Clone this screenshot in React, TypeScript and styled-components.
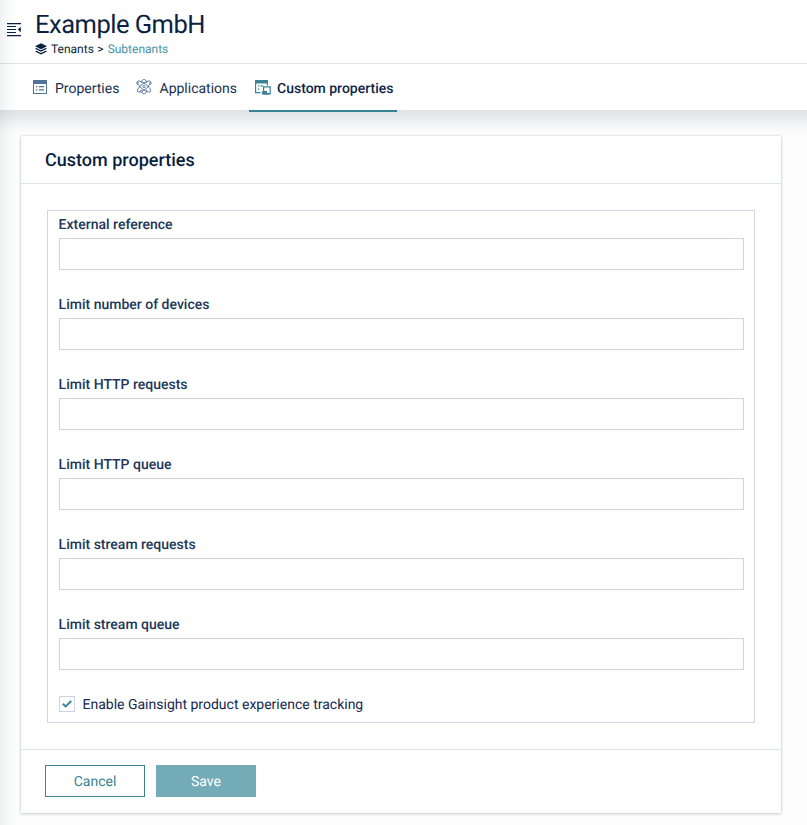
import React, { useState } from 'react';
import styled, { createGlobalStyle, css } from 'styled-components';

const GlobalStyle = createGlobalStyle`
  *, *::before, *::after { box-sizing: border-box; }
  body {
    margin: 0;
    background: #fdfdfd;
    color: #0b1f41;
    font-family: Roboto, sans-serif;
    font-size: 14px;
    line-height: 20px;
    text-rendering: geometricPrecision;
    overflow: hidden;
  }
`;

const Page = styled.div`
  position: relative;
  height: 825px;
  background: #fdfdfd;
`;

const EdgeShadow = styled.div`
  position: absolute;
  inset: 0 auto 0 0;
  width: 17px;
  pointer-events: none;
  background: linear-gradient(to right, rgba(40, 60, 90, 0.07), rgba(40, 60, 90, 0.03) 40%, rgba(40, 60, 90, 0));
`;

const Header = styled.header`
  display: flex;
  align-items: flex-start;
  height: 64px;
  background: #fff;
  border-bottom: 1px solid #dfe2e6;
`;

const MenuToggle = styled.button`
  display: flex;
  width: 35px;
  padding: 23px 0 0 7px;
  border: 0;
  background: none;
`;

const Heading = styled.div`
  padding-top: 9px;
`;

const Title = styled.h1`
  margin: 0;
  color: #0b1f41;
  font-size: 25.5px;
  font-weight: 400;
  letter-spacing: -0.5px;
  line-height: 32px;
`;

const Breadcrumb = styled.nav`
  display: flex;
  align-items: center;
  height: 16px;
  font-size: 12px;

  svg { margin-right: 4px; }
`;

const Crumb = styled.span<{ $current?: boolean }>`
  color: ${p => (p.$current ? '#4a929f' : '#0b1f41')};
`;

const Separator = styled.span`
  margin: 0 4px 0 3.5px;
`;

const Tabs = styled.nav`
  position: relative;
  display: flex;
  height: 46px;
  padding-left: 20px;
  background: #fff;

  &::after {
    content: '';
    position: absolute;
    inset: 100% 0 auto 0;
    height: 25px;
    background: linear-gradient(#dee1e6, #e3e5e9 16%, #eff0f2 45%, #f8f8f9 72%, #fdfdfd);
  }
`;

const Tab = styled.a<{ $active?: boolean; $width: number; $inset: number; $gap: number }>`
  position: relative;
  z-index: 1;
  display: flex;
  align-items: center;
  width: ${p => p.$width}px;
  height: 48px;
  padding-left: ${p => p.$inset}px;
  gap: ${p => p.$gap}px;
  color: #1c3052;
  white-space: nowrap;
  border-bottom: 2px solid transparent;

  svg { flex: none; }

  ${p => p.$active && css`
    color: #0f2548;
    font-weight: 500;
    border-bottom-color: #3a8394;
  `}
`;

const TabLabel = styled.span`
  padding-top: 4px;
`;

const Card = styled.form`
  position: relative;
  width: 760px;
  margin: 26px 0 0 21px;
  background: #fff;
  box-shadow: 0 0 2px rgba(30, 40, 60, 0.18), 0 1px 3px rgba(20, 50, 70, 0.2);
`;

const CardHeader = styled.div`
  height: 48px;
  padding: 13px 24px 0;
  border-bottom: 1px solid #dfe2e6;
`;

const CardTitle = styled.h2`
  margin: 0;
  color: #0b1f41;
  font-size: 18px;
  font-weight: 500;
  line-height: 24px;
`;

const CardBody = styled.div`
  padding: 26px;
`;

const Fieldset = styled.div`
  height: 513px;
  padding: 3px 10px 0 11px;
  border: 1px solid #ced6e1;
`;

const Field = styled.label`
  display: block;
  height: 80px;
`;

const FieldLabel = styled.span`
  display: block;
  height: 24px;
  padding-top: 1px;
  margin-left: -0.4px;
  color: #213757;
  font-weight: 500;
`;

const Input = styled.input`
  display: block;
  width: 100%;
  height: 32px;
  padding: 0 8px;
  border: 1px solid #ced4dc;
  border-radius: 0;
  background: #fff;
  font: inherit;
  outline: none;
`;

const CheckLabel = styled.label`
  display: flex;
  align-items: center;
  height: 20px;
  gap: 7.5px;
  color: #14284e;
`;

const CheckText = styled.span`
  padding-top: 2px;
`;

const CheckBox = styled.span`
  position: relative;
  display: grid;
  place-items: center;
  width: 16px;
  height: 16px;
  border: 1px solid #ced4dc;
`;

const HiddenCheck = styled.input`
  position: absolute;
  inset: 0;
  margin: 0;
  opacity: 0;
`;

const CardFooter = styled.div`
  display: flex;
  gap: 11px;
  height: 64px;
  padding: 15px 24px 0;
  border-top: 1px solid #dfe2e6;
`;

const Button = styled.button<{ $primary?: boolean }>`
  width: 100px;
  height: 32px;
  padding: 2px 0 0;
  border: 1px solid ${p => (p.$primary ? '#73abb7' : '#3a8394')};
  background: ${p => (p.$primary ? '#73abb7' : '#fff')};
  color: ${p => (p.$primary ? '#fff' : '#3a8394')};
  font: 400 14px/20px Roboto, sans-serif;
  text-rendering: inherit;
`;

const MenuIcon = () => (
  <svg width="14" height="14" viewBox="0 0 14 14" fill="#0b1f41">
    <path d="M0 0h14v1.2H0zM0 3h9v1.1H0zM0 6h9v1.1H0zM0 9h9v1.1H0zM0 12h14v1.2H0zM13.8 3.8v5.4L10.8 6.5z" />
  </svg>
);

const LayersIcon = () => (
  <svg width="12" height="12" viewBox="0 0 12 12" fill="#0b1f41">
    <path d="M6 .2 12 3.2 6 6.2 0 3.2zM1.4 5 6 7.3 10.6 5 12 5.8 6 8.8 0 5.8zM1.4 7.7 6 10 10.6 7.7 12 8.5 6 11.6 0 8.5z" />
  </svg>
);

const PropertiesIcon = () => (
  <svg width="14" height="14" viewBox="0 0 14 14" fill="#4f7399">
    <path fillRule="evenodd" d="M0 0h14v14H0zM1 4v9h12V4z" />
    <path d="M3 6h1.5v1.3H3zM6 6h5v1.3H6zM3 9.2h1.5v1.3H3zM6 9.2h5v1.3H6z" />
  </svg>
);

const AtomIcon = () => (
  <svg width="16" height="16" viewBox="0 0 16 16" fill="none" stroke="#53749b" strokeWidth="0.9">
    <ellipse cx="8" cy="7.5" rx="8.2" ry="2.9" transform="rotate(38 8 7.5)" />
    <ellipse cx="8" cy="7.5" rx="8.2" ry="2.9" transform="rotate(-38 8 7.5)" />
    <path d="M5.2 3.9C5.8 1.5 6.9.4 8 .4s2.2 1.1 2.8 3.5M5.2 11.1c.6 2.6 1.7 4 2.8 4s2.2-1.4 2.8-4" />
    <circle cx="8" cy="7.5" r="1.1" />
    <g fill="#fff">
      <circle cx="1.5" cy="4" r="0.9" />
      <circle cx="14.4" cy="4.3" r="0.9" />
      <circle cx="5.2" cy="12.5" r="0.9" />
    </g>
  </svg>
);

const CustomIcon = () => (
  <svg width="16" height="16" viewBox="0 0 16 16" fill="#3a8394">
    <path d="M0 1h13v3.5H0zM0 4h1.2v10H0zM11.8 4H13v2.5h-1.2zM0 13h5.5v1.2H0zM3 6.3h1.3v1.3H3zM5.5 6.3H8v1.3H5.5zM3 9.6h1.3v1.3H3z" />
    <path fillRule="evenodd" d="M8 7.2h7.8v7a1.6 1.6 0 0 1-1.6 1.6H8.4a1.6 1.6 0 0 1-1.6-1.6v-2H8zM9.2 8.4v3.7h2.9v1.8h2.5V8.4z" />
  </svg>
);

const CheckIcon = () => (
  <svg width="10" height="8" viewBox="0 0 10 8" fill="none" stroke="#3a8394" strokeWidth="2">
    <path d="M.8 3.8 3.6 6.4 9.3 1" />
  </svg>
);

const fields = [
  'External reference',
  'Limit number of devices',
  'Limit HTTP requests',
  'Limit HTTP queue',
  'Limit stream requests',
  'Limit stream queue',
];

export default function App() {
  const [tracking, setTracking] = useState(true);
  return (
    <>
      <GlobalStyle />
      <Page>
        <Header>
          <MenuToggle type="button" aria-label="Toggle navigation"><MenuIcon /></MenuToggle>
          <Heading>
            <Title>Example GmbH</Title>
            <Breadcrumb>
              <LayersIcon />
              <Crumb>Tenants</Crumb>
              <Separator>&gt;</Separator>
              <Crumb $current>Subtenants</Crumb>
            </Breadcrumb>
          </Heading>
        </Header>
        <Tabs>
          <Tab $width={104} $inset={12.6} $gap={8.4}><PropertiesIcon /><TabLabel>Properties</TabLabel></Tab>
          <Tab $width={125} $inset={11.5} $gap={8}><AtomIcon /><TabLabel>Applications</TabLabel></Tab>
          <Tab $width={148} $inset={6} $gap={6} $active><CustomIcon /><TabLabel>Custom properties</TabLabel></Tab>
        </Tabs>
        <Card>
          <CardHeader><CardTitle>Custom properties</CardTitle></CardHeader>
          <CardBody>
            <Fieldset>
              {fields.map(name => (
                <Field key={name}>
                  <FieldLabel>{name}</FieldLabel>
                  <Input type="text" />
                </Field>
              ))}
              <CheckLabel>
                <CheckBox>
                  <HiddenCheck type="checkbox" checked={tracking} onChange={() => setTracking(!tracking)} />
                  {tracking && <CheckIcon />}
                </CheckBox>
                <CheckText>Enable Gainsight product experience tracking</CheckText>
              </CheckLabel>
            </Fieldset>
          </CardBody>
          <CardFooter>
            <Button type="button">Cancel</Button>
            <Button type="button" $primary>Save</Button>
          </CardFooter>
        </Card>
        <EdgeShadow />
      </Page>
    </>
  );
}
